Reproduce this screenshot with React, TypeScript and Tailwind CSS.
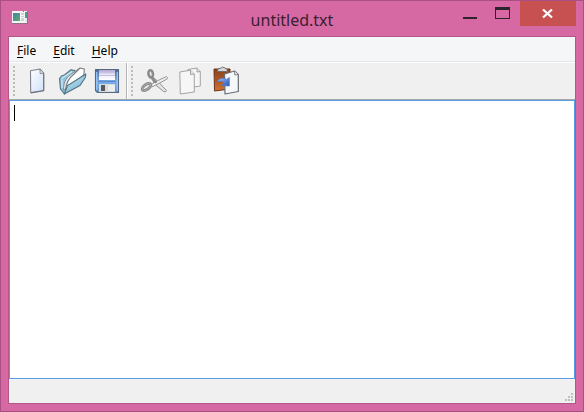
import type { ReactNode } from "react"
import { useState } from "react"

function AppIcon() {
  return (
    <svg className="h-4 w-4" viewBox="0 0 16 16" shapeRendering="crispEdges" aria-hidden="true">
      <defs>
        <linearGradient id="app-screen" x1="0" y1="0" x2="1" y2="1">
          <stop offset="0" stopColor="#4a7fa8" />
          <stop offset="1" stopColor="#5cae70" />
        </linearGradient>
      </defs>
      <rect width="16" height="13" fill="#8f6f85" />
      <rect width="15" height="12" fill="#f4f4f4" />
      <rect x="1" y="2" width="7" height="8" fill="url(#app-screen)" />
      <path d="M9 2h3v2h-3zM9 5h3v1h-3zM9 7h3v3h-3z" fill="#d0d3d6" />
      <path d="M11 0h1v1h-1zM13 1h2v6h-2z" fill="#4d9a8c" />
      <path d="M13 8h2v3h-2z" fill="#e2e4e6" />
    </svg>
  )
}

function NewIcon() {
  return (
    <svg className="h-9 w-9" viewBox="0 0 36 36" aria-hidden="true">
      <defs>
        <linearGradient id="new-page" x1="0" y1="0" x2="1" y2="1">
          <stop offset="0" stopColor="#ffffff" />
          <stop offset="1" stopColor="#cfe0fb" />
        </linearGradient>
      </defs>
      <path d="M12.5 7.7L22 6L25.6 10V27.5L12.7 29.6z" fill="url(#new-page)" stroke="#7d838c" strokeWidth="1.1" strokeLinejoin="round" />
      <path d="M25.8 10.5V27.8L13 30" fill="none" stroke="#6c7178" strokeWidth="0.9" />
      <path d="M22 6L22.2 10.6L25.6 10z" fill="#f4f5f7" stroke="#777c84" strokeWidth="0.9" strokeLinejoin="round" />
    </svg>
  )
}

function OpenIcon() {
  return (
    <svg className="h-9 w-9" viewBox="0 0 36 36" aria-hidden="true">
      <defs>
        <linearGradient id="open-flap" x1="0" y1="0" x2="0.6" y2="1">
          <stop offset="0" stopColor="#c8e8f5" />
          <stop offset="1" stopColor="#7bb8d6" />
        </linearGradient>
      </defs>
      <path d="M5.5 15.5L7.5 13L10.5 12L17 6.8L21 7.5L19 16L10.5 31L6.5 26z" fill="#8fc4de" stroke="#5b7482" strokeWidth="1.2" strokeLinejoin="round" />
      <path d="M7.5 15.5L18 8.5M8 16.5V25" stroke="#c9eaf6" strokeWidth="1.3" />
      <path d="M9.5 27C9.5 18 13 14 18 10.5L24.5 6L26 16L13 25z" fill="#e9ecee" stroke="#7e868c" strokeWidth="0.9" />
      <path d="M11.5 27C12 19 15 15 20 11L26 5L30.3 6L29.8 12L14 26z" fill="#fff" stroke="#747c82" strokeWidth="1.1" strokeLinejoin="round" />
      <path d="M10.3 31L13.5 22.5L18.5 19.5L31.8 11L31.3 14.5L26 22.5z" fill="url(#open-flap)" stroke="#587380" strokeWidth="1.2" strokeLinejoin="round" />
    </svg>
  )
}

function SaveIcon() {
  return (
    <svg className="h-9 w-9" viewBox="0 0 36 36" aria-hidden="true">
      <defs>
        <linearGradient id="save-body" x1="0" y1="0" x2="0" y2="1">
          <stop offset="0" stopColor="#4d6796" />
          <stop offset="0.55" stopColor="#78adeb" />
          <stop offset="1" stopColor="#5b93cf" />
        </linearGradient>
        <linearGradient id="save-label" x1="0" y1="0" x2="0" y2="1">
          <stop offset="0" stopColor="#aea5d2" />
          <stop offset="0.5" stopColor="#eeebfa" />
          <stop offset="1" stopColor="#ffffff" />
        </linearGradient>
      </defs>
      <path d="M5.5 6.5H28.5V29.5H7.5L5.5 27.5z" fill="url(#save-body)" stroke="#556a82" strokeWidth="1.1" strokeLinejoin="round" />
      <path d="M6.7 9V27M27.3 9V28" stroke="#9bc8f7" strokeWidth="1.2" />
      <rect x="9" y="7" width="16" height="10" fill="url(#save-label)" />
      <path d="M9 9.5H25M9 12.5H25" stroke="#c5c0dc" />
      <path d="M8 18.5H26" stroke="#5f88c6" />
      <rect x="9" y="21" width="16" height="8" fill="#d9dbdc" />
      <path d="M18 22H25V28H18z" fill="#ececec" />
      <rect x="11" y="22" width="4" height="6" fill="#55585c" />
    </svg>
  )
}

function CutIcon() {
  return (
    <svg className="h-9 w-9" viewBox="0 0 36 36" aria-hidden="true">
      <path d="M16.5 14L21 17.5L30.5 27.5Q30 29.8 27.5 28.5L18 20.5z" fill="#e4e4e4" stroke="#909090" strokeLinejoin="round" />
      <path d="M15 21.5L20 18.5L30.5 13.5Q32.3 14.5 31 16L19 22.5L15.5 24z" fill="#f1f1f1" stroke="#959595" strokeLinejoin="round" />
      <ellipse cx="14.7" cy="10.8" rx="2.2" ry="3.6" transform="rotate(-12 14.7 10.8)" fill="none" stroke="#8c8c8c" strokeWidth="2.6" />
      <ellipse cx="10.5" cy="24" rx="5" ry="2.5" transform="rotate(-35 10.5 24)" fill="none" stroke="#8c8c8c" strokeWidth="2.9" />
      <ellipse cx="10.5" cy="24" rx="5" ry="2.5" transform="rotate(-35 10.5 24)" fill="none" stroke="#adadad" strokeWidth="0.9" />
      <path d="M15.5 14L19 19" stroke="#8c8c8c" strokeWidth="3" />
      <circle cx="19.7" cy="19.3" r="1" fill="#777" />
    </svg>
  )
}

function CopyIcon() {
  return (
    <svg className="h-9 w-9" viewBox="0 0 36 36" aria-hidden="true">
      <g fill="#f6f6f6" stroke="#a3a3a3" strokeLinejoin="round">
        <path d="M16 6.5L25 5L28.3 8.5V23L16 25z" />
        <path d="M25 5V9L28.3 8.5" fill="#e4e4e4" />
        <path d="M7.8 9L18.5 7.2L22.3 11V29L8.3 31z" />
        <path d="M18.5 7.2V11.5L22.3 11" fill="#e4e4e4" />
      </g>
    </svg>
  )
}

function PasteIcon() {
  return (
    <svg className="h-9 w-9" viewBox="0 0 36 36" aria-hidden="true">
      <defs>
        <linearGradient id="paste-board" x1="0" y1="0" x2="0" y2="1">
          <stop offset="0" stopColor="#8a431d" />
          <stop offset="0.6" stopColor="#b15b27" />
          <stop offset="1" stopColor="#cf7435" />
        </linearGradient>
        <linearGradient id="paste-arrow" x1="0" y1="0" x2="1" y2="1">
          <stop offset="0" stopColor="#a9c8ff" />
          <stop offset="1" stopColor="#2453b5" />
        </linearGradient>
      </defs>
      <path d="M6 6H22V26L6.5 28z" fill="url(#paste-board)" stroke="#6d351a" strokeLinejoin="round" />
      <path d="M9.5 8.5L10 6L13 5L14.5 4L17 5L19 6L19.5 8.5z" fill="#d5d6d7" stroke="#6a6a6a" strokeWidth="0.9" />
      <path d="M16.5 11L26.5 8L30.3 11.5V28.5L17 31z" fill="#f5f7f9" stroke="#686c72" strokeWidth="1.2" strokeLinejoin="round" />
      <path d="M26.5 8L26.8 12L30.3 11.5" fill="#dfe2e6" stroke="#777b81" strokeWidth="0.9" />
      <path d="M9 19.5C10.5 15 15 14 18.5 16.5L21.3 14.5V23L13.5 22.5L16 20C14 17.5 11 18 9 19.5z" fill="url(#paste-arrow)" stroke="#5079c2" strokeWidth="0.8" />
    </svg>
  )
}

const fileTools = [
  { label: "New", icon: <NewIcon /> },
  { label: "Open", icon: <OpenIcon /> },
  { label: "Save", icon: <SaveIcon /> },
]

const editTools = [
  { label: "Cut", icon: <CutIcon />, disabled: true },
  { label: "Copy", icon: <CopyIcon />, disabled: true },
  { label: "Paste", icon: <PasteIcon /> },
]

function Grip() {
  return (
    <div className="flex w-2 flex-col gap-0.5 pt-[3px] pl-[3px]">
      {Array.from({ length: 8 }, (_, i) => (
        <span key={i} className="h-0.5 w-0.5 bg-[#bcbcbc]" />
      ))}
    </div>
  )
}

function ToolButton({ label, icon, disabled }: { label: string; icon: ReactNode; disabled?: boolean }) {
  return (
    <button type="button" aria-label={label} disabled={disabled} className="h-9 w-9 enabled:hover:bg-[#dcebf8]">
      {icon}
    </button>
  )
}

export default function App() {
  const [text, setText] = useState("")

  return (
    <div className="flex h-screen flex-col border border-[#a94f82] bg-[#d669a3] px-[7px] pb-[7px] font-['Noto_Sans',sans-serif] text-black">
      {/* Title bar */}
      <header className="grid h-[35px] shrink-0 grid-cols-[1fr_auto_1fr]">
        <div className="pt-2.5 pl-1">
          <AppIcon />
        </div>
        <h1 className="pt-[7px] text-base leading-6 text-[#3a2030]">untitled.txt</h1>
        <div className="flex items-start justify-end">
          <button type="button" aria-label="Minimize" className="flex h-6 w-8 justify-center pt-4">
            <span className="h-0.5 w-3.5 bg-[#2b2529]" />
          </button>
          <button type="button" aria-label="Maximize" className="mr-0.5 flex h-6 w-8 justify-center pt-1.5">
            <span className="h-3 w-[15px] border border-t-[3px] border-[#2b2529]" />
          </button>
          <button type="button" aria-label="Close" className="flex h-[25px] w-14 items-center justify-center bg-[#c75050]">
            <svg className="h-3 w-3" viewBox="0 0 12 12" aria-hidden="true">
              <path d="M1 1.5L10 9.5M10 1.5L1 9.5" stroke="#fff" strokeWidth="2.3" />
            </svg>
          </button>
        </div>
      </header>

      <main className="flex min-h-0 flex-1 flex-col border border-[#b45787] bg-[#f0f0f0]">
        <nav className="flex h-[25px] shrink-0 gap-px border-b border-[#e3e5e9] bg-[#f5f6f7] pt-0.5 text-xs leading-6">
          <button type="button" className="px-2">
            <u className="underline-offset-2">F</u>ile
          </button>
          <button type="button" className="px-2">
            <u className="underline-offset-2">E</u>dit
          </button>
          <button type="button" className="px-2">
            <u className="underline-offset-2">H</u>elp
          </button>
        </nav>

        {/* Toolbars */}
        <div className="flex h-[38px] shrink-0 border-t border-b border-t-white border-b-[#a8a8a8]">
          <div role="toolbar" aria-label="File" className="flex border-r border-[#b4b4b4] pl-px">
            <Grip />
            {fileTools.map((tool) => (
              <ToolButton key={tool.label} {...tool} />
            ))}
          </div>
          <div role="toolbar" aria-label="Edit" className="flex border-l border-white">
            <Grip />
            {editTools.map((tool) => (
              <ToolButton key={tool.label} {...tool} />
            ))}
          </div>
        </div>

        <div className="relative flex min-h-0 flex-1">
          <textarea
            aria-label="Document text"
            value={text}
            onChange={(e) => setText(e.target.value)}
            className="peer w-full resize-none border border-[#569de5] bg-white p-1 text-xs leading-4 outline-none"
          />
          {/* Resting caret, gives way to the real one on focus */}
          {text === "" && <span className="pointer-events-none absolute top-[5px] left-[5px] h-4 w-px bg-black peer-focus:hidden" />}
        </div>

        {/* Status bar */}
        <footer className="flex h-6 shrink-0 items-end justify-end p-0.5">
          <svg className="h-2 w-2" viewBox="0 0 8 8" shapeRendering="crispEdges" aria-hidden="true">
            <path d="M6 0h2v2h-2zM3 3h2v2h-2zM6 3h2v2h-2zM0 6h2v2h-2zM3 6h2v2h-2zM6 6h2v2h-2z" fill="#bfbfbf" />
          </svg>
        </footer>
      </main>
    </div>
  )
}
